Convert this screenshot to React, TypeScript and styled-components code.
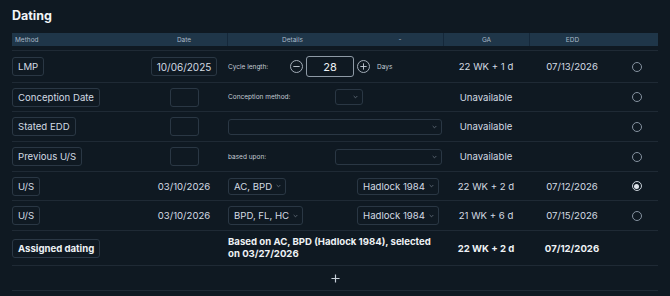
import React from 'react';
import styled, { createGlobalStyle } from 'styled-components';

const GlobalStyle = createGlobalStyle`
  html, body {
    margin: 0;
    padding: 0;
    background: #0f1922;
  }
  body {
    font-family: Inter, "Noto Sans", "Liberation Sans", sans-serif;
    color: #d3dbe2;
  }
  * {
    box-sizing: border-box;
  }
`;

const COLS = '129px 86px 130px 86px 86px 86px 43px';
const TEXT = '9.6px';

const Page = styled.div`
  width: 670px;
  height: 296px;
  padding: 0 12px;
  overflow: hidden;
`;

const Title = styled.h2`
  margin: 0;
  padding-top: 8px;
  height: 33px;
  font-size: 12.5px;
  font-weight: 700;
  color: #f2f5f8;
`;

const HeaderRow = styled.div`
  display: grid;
  grid-template-columns: ${COLS};
  height: 13px;
  background: #1f3649;
  margin-bottom: 4px;
`;

const HeadCell = styled.div<{ $align?: string; $divider?: boolean }>`
  display: flex;
  align-items: center;
  justify-content: ${(p) => p.$align || 'center'};
  padding-left: ${(p) => (p.$align === 'flex-start' ? '3px' : '0')};
  font-size: 6.5px;
  color: #a9b9c8;
  border-left: ${(p) => (p.$divider ? '1px solid #15283a' : 'none')};
`;

const Row = styled.div<{ $h: number }>`
  display: grid;
  grid-template-columns: ${COLS};
  height: ${(p) => p.$h}px;
  border-top: 1px solid #1f2a35;
  align-items: center;
`;

const Cell = styled.div<{ $align?: string; $span?: number }>`
  display: flex;
  align-items: center;
  justify-content: ${(p) => p.$align || 'center'};
  grid-column: span ${(p) => p.$span || 1};
  font-size: ${TEXT};
  min-width: 0;
  white-space: nowrap;
`;

const Tag = styled.span<{ $bold?: boolean }>`
  display: inline-flex;
  align-items: center;
  height: 19px;
  padding: 0 5px;
  border: 1px solid #2a3744;
  border-radius: 3px;
  font-size: ${TEXT};
  font-weight: ${(p) => (p.$bold ? 700 : 400)};
  color: ${(p) => (p.$bold ? '#eef2f5' : '#d3dbe2')};
`;

const DateBox = styled.span<{ $empty?: boolean }>`
  display: inline-flex;
  align-items: center;
  justify-content: center;
  height: 19px;
  min-width: ${(p) => (p.$empty ? '29px' : '0')};
  padding: ${(p) => (p.$empty ? '0' : '0 5px')};
  border: 1px solid #2a3744;
  border-radius: 3px;
  font-size: 10px;
`;

const Plain = styled.span<{ $bold?: boolean }>`
  font-size: ${TEXT};
  font-weight: ${(p) => (p.$bold ? 700 : 400)};
  color: ${(p) => (p.$bold ? '#eef2f5' : '#d3dbe2')};
`;

const Label = styled.span<{ $w?: number }>`
  font-size: 6.5px;
  color: #c3ccd5;
  width: ${(p) => (p.$w ? `${p.$w}px` : 'auto')};
  flex-shrink: 0;
`;

const DetailsGrid = styled.div<{ $single?: boolean }>`
  display: grid;
  grid-template-columns: ${(p) => (p.$single ? '1fr' : '107px 1fr')};
  align-items: center;
  width: 100%;
  padding: 0 1px;
`;

const DetailsFlex = styled.div`
  display: flex;
  align-items: center;
  width: 100%;
  padding-left: 1px;
`;

const Select = styled.div<{ $w?: number; $full?: boolean; $h?: number }>`
  display: flex;
  align-items: center;
  gap: 4px;
  height: ${(p) => p.$h || 17}px;
  width: ${(p) => (p.$full ? '100%' : p.$w ? `${p.$w}px` : 'auto')};
  padding: 0 4px 0 5px;
  border: 1px solid #2a3744;
  border-radius: 3px;
  font-size: ${TEXT};
  color: #d3dbe2;
  white-space: nowrap;
`;

const Chevron = styled.svg`
  width: 5px;
  height: 4px;
  margin-left: auto;
  flex-shrink: 0;
`;

const Stepper = styled.div`
  display: flex;
  align-items: center;
  gap: 3px;
`;

const RoundBtn = styled.span`
  display: inline-flex;
  align-items: center;
  justify-content: center;
  width: 13px;
  height: 13px;
  border: 1px solid #a3adb8;
  border-radius: 50%;
`;

const StepInput = styled.span`
  display: inline-flex;
  align-items: center;
  justify-content: center;
  width: 48px;
  height: 21px;
  border: 1px solid #8e9aa6;
  border-radius: 3px;
  font-size: 11px;
  color: #eef2f5;
`;

const Days = styled.span`
  font-size: 6.5px;
  color: #c3ccd5;
  margin-left: 7px;
`;

const Radio = styled.span<{ $checked?: boolean }>`
  display: inline-flex;
  align-items: center;
  justify-content: center;
  width: 10px;
  height: 10px;
  border-radius: 50%;
  border: 1px solid ${(p) => (p.$checked ? '#c6ced6' : '#8592a0')};
  &::after {
    content: '';
    display: ${(p) => (p.$checked ? 'block' : 'none')};
    width: 5px;
    height: 5px;
    border-radius: 50%;
    background: #dde3e9;
  }
`;

const AssignedText = styled.div`
  font-size: 9.6px;
  font-weight: 700;
  line-height: 12px;
  color: #eef2f5;
  width: 210px;
  padding-left: 1px;
  white-space: normal;
`;

const AddRow = styled.div`
  display: flex;
  align-items: center;
  justify-content: center;
  height: 26px;
  border-top: 1px solid #1f2a35;
  border-bottom: 1px solid #1f2a35;
`;

const ChevronIcon = () => (
  <Chevron viewBox="0 0 6 4">
    <path d="M0.8 0.8 L3 3 L5.2 0.8" fill="none" stroke="#6f7c89" strokeWidth="0.9" />
  </Chevron>
);

const SelectBox = ({ value, w, full, h }: { value?: string; w?: number; full?: boolean; h?: number }) => (
  <Select $w={w} $full={full} $h={h}>
    {value && <span>{value}</span>}
    <ChevronIcon />
  </Select>
);

const PlusIcon = ({ size = 7, color = '#c7d0d9' }: { size?: number; color?: string }) => (
  <svg width={size} height={size} viewBox="0 0 10 10">
    <path d="M5 0.5 V9.5 M0.5 5 H9.5" stroke={color} strokeWidth="1.3" />
  </svg>
);

const MinusIcon = () => (
  <svg width={7} height={7} viewBox="0 0 10 10">
    <path d="M0.5 5 H9.5" stroke="#c7d0d9" strokeWidth="1.3" />
  </svg>
);

export default function App() {
  return (
    <Page>
      <GlobalStyle />
      <Title>Dating</Title>

      <HeaderRow>
        <HeadCell $align="flex-start">Method</HeadCell>
        <HeadCell>Date</HeadCell>
        <HeadCell $divider>Details</HeadCell>
        <HeadCell>-</HeadCell>
        <HeadCell $divider>GA</HeadCell>
        <HeadCell $divider>EDD</HeadCell>
        <HeadCell />
      </HeaderRow>

      <Row $h={32}>
        <Cell $align="flex-start"><Tag>LMP</Tag></Cell>
        <Cell><DateBox>10/06/2025</DateBox></Cell>
        <Cell $span={2} $align="flex-start">
          <DetailsFlex>
            <Label $w={62}>Cycle length:</Label>
            <Stepper>
              <RoundBtn><MinusIcon /></RoundBtn>
              <StepInput>28</StepInput>
              <RoundBtn><PlusIcon /></RoundBtn>
            </Stepper>
            <Days>Days</Days>
          </DetailsFlex>
        </Cell>
        <Cell><Plain>22 WK + 1 d</Plain></Cell>
        <Cell><Plain>07/13/2026</Plain></Cell>
        <Cell><Radio /></Cell>
      </Row>

      <Row $h={29}>
        <Cell $align="flex-start"><Tag>Conception Date</Tag></Cell>
        <Cell><DateBox $empty /></Cell>
        <Cell $span={2}>
          <DetailsGrid>
            <Label>Conception method:</Label>
            <SelectBox w={28} h={16} />
          </DetailsGrid>
        </Cell>
        <Cell><Plain>Unavailable</Plain></Cell>
        <Cell />
        <Cell><Radio /></Cell>
      </Row>

      <Row $h={30}>
        <Cell $align="flex-start"><Tag>Stated EDD</Tag></Cell>
        <Cell><DateBox $empty /></Cell>
        <Cell $span={2}>
          <DetailsGrid $single>
            <SelectBox full h={16} />
          </DetailsGrid>
        </Cell>
        <Cell><Plain>Unavailable</Plain></Cell>
        <Cell />
        <Cell><Radio /></Cell>
      </Row>

      <Row $h={30}>
        <Cell $align="flex-start"><Tag>Previous U/S</Tag></Cell>
        <Cell><DateBox $empty /></Cell>
        <Cell $span={2}>
          <DetailsGrid>
            <Label>based upon:</Label>
            <SelectBox full h={16} />
          </DetailsGrid>
        </Cell>
        <Cell><Plain>Unavailable</Plain></Cell>
        <Cell />
        <Cell><Radio /></Cell>
      </Row>

      <Row $h={29}>
        <Cell $align="flex-start"><Tag>U/S</Tag></Cell>
        <Cell><Plain>03/10/2026</Plain></Cell>
        <Cell $align="flex-start"><DetailsFlex><SelectBox value="AC, BPD" /></DetailsFlex></Cell>
        <Cell $align="flex-start"><SelectBox value="Hadlock 1984" /></Cell>
        <Cell><Plain>22 WK + 2 d</Plain></Cell>
        <Cell><Plain>07/12/2026</Plain></Cell>
        <Cell><Radio $checked /></Cell>
      </Row>

      <Row $h={30}>
        <Cell $align="flex-start"><Tag>U/S</Tag></Cell>
        <Cell><Plain>03/10/2026</Plain></Cell>
        <Cell $align="flex-start"><DetailsFlex><SelectBox value="BPD, FL, HC" h={19} /></DetailsFlex></Cell>
        <Cell $align="flex-start"><SelectBox value="Hadlock 1984" h={19} /></Cell>
        <Cell><Plain>21 WK + 6 d</Plain></Cell>
        <Cell><Plain>07/15/2026</Plain></Cell>
        <Cell><Radio /></Cell>
      </Row>

      <Row $h={35}>
        <Cell $align="flex-start"><Tag $bold>Assigned dating</Tag></Cell>
        <Cell />
        <Cell $span={2} $align="flex-start">
          <AssignedText>Based on AC, BPD (Hadlock 1984), selected on 03/27/2026</AssignedText>
        </Cell>
        <Cell><Plain $bold>22 WK + 2 d</Plain></Cell>
        <Cell><Plain $bold>07/12/2026</Plain></Cell>
        <Cell />
      </Row>

      <AddRow>
        <PlusIcon size={9} />
      </AddRow>
    </Page>
  );
}
